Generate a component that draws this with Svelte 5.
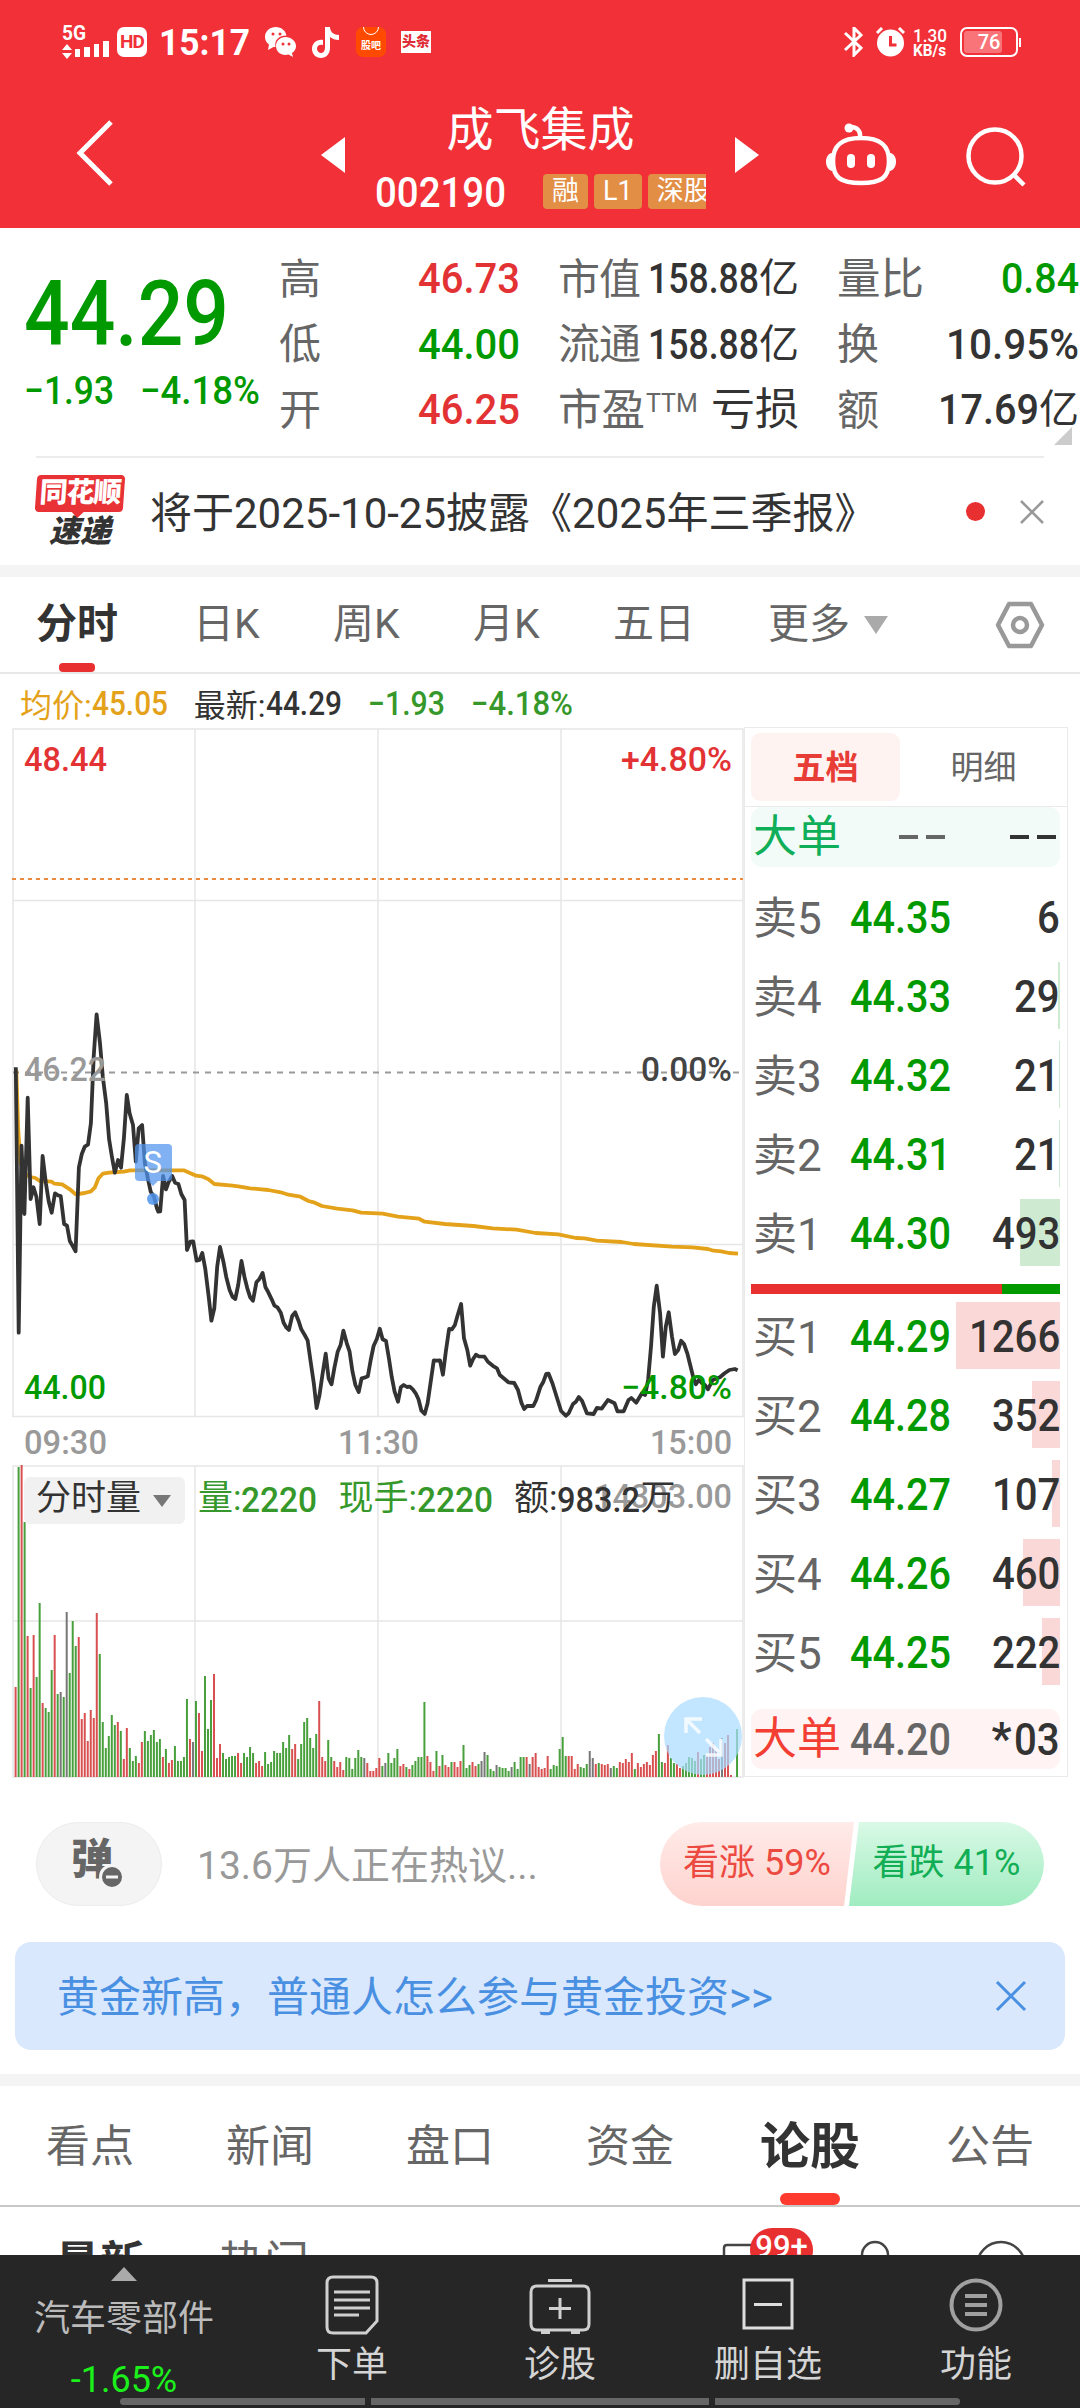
<script lang="ts">
  type Level = { name: string; price: string; amount: string; bar: number };

  // Order book, bar is the width of the volume bar in px
  const sells: Level[] = [
    { name: '卖5', price: '44.35', amount: '6', bar: 0 },
    { name: '卖4', price: '44.33', amount: '29', bar: 2 },
    { name: '卖3', price: '44.32', amount: '21', bar: 1 },
    { name: '卖2', price: '44.31', amount: '21', bar: 1 },
    { name: '卖1', price: '44.30', amount: '493', bar: 40 },
  ];
  const buys: Level[] = [
    { name: '买1', price: '44.29', amount: '1266', bar: 104 },
    { name: '买2', price: '44.28', amount: '352', bar: 28 },
    { name: '买3', price: '44.27', amount: '107', bar: 8 },
    { name: '买4', price: '44.26', amount: '460', bar: 37 },
    { name: '买5', price: '44.25', amount: '222', bar: 18 },
  ];

  const newsTabs = ['看点', '新闻', '盘口', '资金', '论股', '公告'];

  // Price and average lines, "x,y" pairs on a finer grid than the chart
  const price =
    '33,52 39,848 45,287 51,492 58,143 64,447 70,412 76,440 83,522 89,318 96,400 102,455 108,488 115,430 121,436 127,438 134,522 140,527 146,573 152,588 158,604 165,352 171,312 177,290 184,284 190,220 196,20 202,-107 209,-20 215,80 222,160 228,268 234,320 240,368 247,330 253,353 259,265 265,135 271,190 278,225 284,335 290,235 297,225 303,340 309,385 315,425 322,440 328,475 331,485 335,484 341,378 347,418 353,395 360,378 366,398 373,402 379,432 386,450 391,600 398,575 404,574 411,632 417,630 423,609 429,655 436,735 442,812 448,775 454,650 460,591 467,635 473,680 480,720 486,740 492,747 498,705 505,633 511,680 517,715 523,742 529,752 536,697 542,688 549,669 555,712 561,727 568,748 574,767 580,772 587,788 593,818 599,833 604,840 611,798 617,787 624,812 630,838 637,855 643,871 649,930 656,1000 662,1074 668,1035 674,975 681,911 687,985 693,1003 699,955 706,905 712,885 718,842 725,880 731,905 737,965 743,1005 750,1026 756,985 762,983 769,979 775,930 781,888 788,866 794,836 800,868 807,873 813,925 819,980 825,1025 832,1055 838,1012 844,1005 851,1011 857,1010 863,1018 869,1030 875,1048 881,1082 888,1092 894,1060 900,1000 907,931 913,932 920,931 926,974 932,905 939,837 945,838 951,825 957,795 964,762 970,865 977,900 983,947 989,928 995,914 1001,919 1013,920 1020,935 1033,950 1039,955 1045,975 1063,997 1075,999 1083,1020 1090,1058 1096,1077 1102,1068 1115,1068 1121,1050 1130,1010 1136,995 1142,972 1147,971 1155,1000 1167,1055 1173,1083 1183,1097 1189,1090 1198,1062 1204,1055 1210,1041 1217,1053 1227,1090 1241,1092 1248,1074 1258,1076 1271,1050 1285,1060 1291,1084 1304,1084 1314,1050 1320,1044 1330,1058 1342,1030 1349,1035 1355,990 1361,890 1367,770 1373,707 1380,790 1386,920 1392,830 1398,787 1405,860 1411,912 1418,900 1424,872 1430,882 1437,910 1443,945 1449,980 1455,1003 1461,990 1468,1000 1474,1005 1480,1018 1490,990 1505,982 1515,970 1525,960 1536,957 1542,961';
  const average =
    '34,60 38,240 43,340 52,372 64,381 74,384 83,393 108,395 114,401 130,403 146,418 158,433 177,429 190,424 198,413 206,385 215,371 228,368 259,365 272,361 384,361 410,377 422,379 436,388 448,402 486,407 498,409 523,415 561,420 587,427 603,434 628,440 645,453 658,458 673,468 705,476 737,481 755,488 800,491 832,500 876,506 888,515 930,522 990,528 1030,535 1080,539 1120,549 1167,553 1204,564 1222,565 1248,572 1300,576 1325,582 1405,590 1448,592 1480,597 1492,602 1508,604 1524,609 1543,611';

  function toPoints(line: string) {
    return line
      .split(' ')
      .map((p) => {
        const [x, y] = p.split(',').map(Number);
        return `${(x / 2.0907).toFixed(1)},${(322 + y / 3).toFixed(1)}`;
      })
      .join(' ');
  }

  // One bar per minute: r = up, g = down, k = flat
  const volume =
    'r90 g310 r312 g255 r141 g89 r142 g100 g174 r74 g69 g65 g107 r142 g83 k85 g80 k165 g104 g156 g131 r140 r58 r64 r36 r67 r59 r164 g123 g55 g29 g41 g62 g52 r55 g46 r18 r49 g29 g16 g21 r14 r35 g46 g36 g42 g47 g35 g38 r20 g28 r14 r17 g31 g16 g16 g20 g78 r38 k35 g76 r64 r26 g101 g48 g77 r103 r19 r33 g24 g18 g20 g21 g21 r24 r14 g24 g20 g30 g24 r14 r16 r11 g25 g13 g15 g26 g24 g24 g35 g29 g42 r28 r33 g18 g33 g55 g59 g39 g29 g43 r76 r20 r16 g37 g20 r16 r10 r15 r7 g20 g19 g8 g19 g27 g20 k19 r14 r6 r6 r9 r19 g11 k14 g24 g14 g19 g28 r11 r13 g10 r8 g12 g16 g20 g20 g75 r21 r15 r6 g26 r11 g22 r12 r10 g15 r15 r10 r16 g32 g9 g12 r15 r11 g13 k16 k25 g22 g8 g6 k12 g10 g9 g9 g6 k10 g15 g8 g20 g20 r20 k13 r20 r24 r10 r8 r9 r21 g8 g12 g11 g28 g40 g21 r21 r21 r8 r13 g10 g9 g13 k26 k19 r13 g14 r13 r12 r13 k9 g11 g9 r15 r14 r18 r15 r24 g8 r14 r10 r13 r15 r12 r22 r26 g43 g15 r14 r32 g19 g14 r13 r9 g11 g14 g20 g19 g16 r25 g18 g22 r22 r30 r34 r26 r18 k39 r34 r42 r2 g0 g48';
  const barColors: Record<string, string> = { r: '#d95050', g: '#48a03c', k: '#777' };
  const bars = volume.split(' ').map((v, i) => ({
    x: 14.6 + i * 3.006,
    h: Number(v.slice(1)),
    color: barColors[v[0]],
  }));
</script>

<!-- Narrow figures, fitted to a given width -->
{#snippet num(text: string, width: number, size: number, weight = 500)}
  <svg class="num" {width} height={size * 0.711}>
    <text x="0" y={size * 0.711} font-size={size} font-weight={weight} textLength={width} lengthAdjust="spacingAndGlyphs">{text}</text>
  </svg>
{/snippet}

{#snippet level(row: Level, side: string)}
  <div class="level">
    <span class="bar {side}" style="width: {row.bar}px"></span>
    <span class="name">{row.name}</span>
    <span class="price green">{@render num(row.price, 101, 45)}</span>
    <span class="amount">{@render num(row.amount, row.amount.length * 22.8, 45)}</span>
  </div>
{/snippet}

<div class="app">
  <header>
    <div class="status">
      <svg class="signal" width="50" height="36" viewBox="0 0 50 36">
        <text x="0" y="15" font-size="20" font-weight="700" textLength="24" lengthAdjust="spacingAndGlyphs">5G</text>
        <path d="M0 25l5-6 5 6zM0 28l5 6 5-6zM13 24h5v8h-5zM22 22h6v10h-6zM32 19h5v13h-5zM41 16h6v16h-6z" />
      </svg>
      <span class="hd">HD</span>
      <span class="time">{@render num('15:17', 91, 37, 700)}</span>
      <svg class="wechat" width="31" height="31" viewBox="0 0 31 31">
        <path d="M11 0C5 0 0 4 0 10c0 3 1.500 6 4 7.500L3 23l5.500-3h2C9 13 14 8.500 21.500 8.500 20.500 3.500 16 0 11 0z" />
        <path d="M20.500 10C15 10 11 14 11 19s4 9 9.500 9l3-.4L28 30l-1-4c2.500-1.500 4-4 4-7 0-5-5-9-10.500-9z" />
        <g fill="#f13038"><circle cx="8" cy="7" r="1.500" /><circle cx="15" cy="7" r="1.500" /><circle cx="18" cy="17" r="1.500" /><circle cx="24" cy="17" r="1.500" /></g>
      </svg>
      <svg class="tiktok" width="27" height="31" viewBox="0 0 27 31">
        <path d="M13 0h5c0 5 4 8 9 8v5c-4 0-6.500-1-9-3v11c0 6-4 10-9 10s-9-4-9-9c0-6 5-10 11-9v5c-4-1-6 1-6 4 0 2 2 4 4 4s4-2 4-5z" />
      </svg>
      <span class="guba"><i></i>股吧</span>
      <span class="toutiao">头条</span>
      <svg class="bluetooth" width="19" height="30" viewBox="0 0 19 30">
        <path d="M1 6l16 15-7 7V1l7 7L1 23" fill="none" stroke="#fff" stroke-width="3" />
      </svg>
      <svg class="alarm" width="31" height="30" viewBox="0 0 31 30">
        <circle cx="15.500" cy="16" r="13.500" />
        <path d="M2 6l5-5M24 1l5 5" stroke="#fff" stroke-width="3" />
        <path d="M15.500 9v9h6" fill="none" stroke="#f13038" stroke-width="3" />
      </svg>
      <span class="speed"><span>{@render num('1.30', 34, 19)}</span><span>{@render num('KB/s', 33, 16, 700)}</span></span>
      <span class="battery"><i></i><b>76</b></span>
    </div>

    <div class="title-row">
      <svg class="back" width="40" height="68" viewBox="0 0 40 68">
        <path d="M37 3L6 34l31 31" fill="none" stroke="#fff" stroke-width="5" />
      </svg>
      <svg class="prev" width="24" height="36" viewBox="0 0 24 36"><path d="M24 0v36L0 18z" /></svg>
      <div class="stock">
        <h1>成飞集成</h1>
        <div class="code">
          {@render num('002190', 131, 43)}
          <div class="tags"><span>融</span><span>L1</span><span>深股通</span></div>
        </div>
      </div>
      <svg class="next" width="24" height="36" viewBox="0 0 24 36"><path d="M0 0v36l24-18z" /></svg>
      <svg class="robot" width="70" height="64" viewBox="0 0 70 64">
        <path d="M35 15c20 0 28 8 28 23 0 17-8 22-28 22S7 55 7 38c0-15 8-23 28-23zM34 15c1-7-3-11-9-11" fill="none" stroke="#fff" stroke-width="4.500" />
        <circle cx="23" cy="5" r="4.500" />
        <rect x="21" y="31" width="8" height="14" rx="4" />
        <rect x="41" y="31" width="8" height="14" rx="4" />
        <path d="M6 30c-8 1-8 16 0 18zM64 30c8 1 8 16 0 18z" />
      </svg>
      <svg class="search" width="62" height="62" viewBox="0 0 62 62">
        <circle cx="30" cy="30" r="26.500" fill="none" stroke="#fff" stroke-width="4.500" />
        <path d="M48 48l11 11" stroke="#fff" stroke-width="4.500" />
      </svg>
    </div>
  </header>

  <section class="quote">
    <div class="last green">
      {@render num('44.29', 205, 91)}
      <div class="change">{@render num('−1.93', 90, 39)}{@render num('−4.18%', 120, 39)}</div>
    </div>
    <div class="stats">
      <span class="label">高</span><span class="value red">{@render num('46.73', 102, 43)}</span>
      <span class="label">市值</span><span class="value">{@render num('158.88', 111, 43)}<small>亿</small></span>
      <span class="label wide">量比</span><span class="value green">{@render num('0.84', 78, 43)}</span>

      <span class="label">低</span><span class="value green">{@render num('44.00', 102, 43)}</span>
      <span class="label">流通</span><span class="value">{@render num('158.88', 111, 43)}<small>亿</small></span>
      <span class="label">换</span><span class="value">{@render num('10.95%', 133, 43)}</span>

      <span class="label">开</span><span class="value red">{@render num('46.25', 102, 43)}</span>
      <span class="label wide">市盈<sup>TTM</sup></span><span class="value wide"><small>亏损</small></span>
      <span class="label">额</span><span class="value">{@render num('17.69', 101, 43)}<small>亿</small></span>
    </div>
    <i class="corner"></i>
  </section>

  <section class="news">
    <div class="badge"><b>同花顺</b><em>速递</em></div>
    <p>将于2025-10-25披露《2025年三季报》</p>
    <i class="dot"></i>
    <svg width="24" height="24" viewBox="0 0 24 24"><path d="M1 1l22 22M23 1L1 23" stroke="#999" stroke-width="2.500" /></svg>
  </section>

  <div class="band"></div>

  <nav class="periods">
    <span class="active">分时</span>
    <span>日K</span>
    <span>周K</span>
    <span>月K</span>
    <span>五日</span>
    <span>更多<i></i></span>
    <svg width="50" height="48" viewBox="0 0 50 48">
      <path d="M14 3h22l11 21-11 21H14L3 24z" fill="none" stroke="#999" stroke-width="4.500" stroke-linejoin="round" />
      <circle cx="25" cy="24" r="7" fill="none" stroke="#999" stroke-width="4.500" />
    </svg>
  </nav>

  <div class="legend">
    <span class="avg">均价:{@render num('45.05', 76, 33)}</span>
    <span>最新:{@render num('44.29', 76, 33)}</span>
    <span class="down">{@render num('−1.93', 77, 33)}</span>
    <span class="down">{@render num('−4.18%', 102, 33)}</span>
  </div>

  <section class="market">
    <div class="chart">
      <svg width="744" height="1050" viewBox="0 0 744 1050">
        <g fill="none" stroke="#e6e6e6" stroke-width="1.500">
          <path d="M13 1h730v687.500H13zM13 172.500h730M13 516.500h730M195 1v687M378 1v687M561 1v687" />
          <path d="M13 738h730v311H13zM13 893h730M195 738v311M378 738v311M561 738v311" />
        </g>
        <path d="M12 151h731" stroke="#ec8a3c" stroke-width="2" stroke-dasharray="4 4" />
        <path d="M13 344.500h726" stroke="#999" stroke-width="2" stroke-dasharray="6 6" />

        <polyline points={toPoints(average)} class="line" stroke="#e3a21a" />
        <polyline points={toPoints(price)} class="line" stroke="#333" />

        <!-- Sell marker -->
        <g fill="#4f94ee">
          <rect x="135" y="416" width="37" height="37" rx="4" opacity=".72" />
          <path d="M148 453h10l-5 5z" opacity=".72" />
          <circle cx="153" cy="471" r="6" opacity=".85" />
          <text x="143.500" y="445" font-size="31" fill="#fff">S</text>
        </g>

        <g font-size="34" font-weight="500">
          <text x="24" y="43" textLength="83" lengthAdjust="spacingAndGlyphs" fill="#e33234">48.44</text>
          <text x="621" y="43" textLength="111" lengthAdjust="spacingAndGlyphs" fill="#e33234">+4.80%</text>
          <text x="24" y="353" textLength="82" lengthAdjust="spacingAndGlyphs" fill="#999">46.22</text>
          <text x="641" y="353" textLength="91" lengthAdjust="spacingAndGlyphs" fill="#444">0.00%</text>
          <text x="24" y="671" textLength="82" lengthAdjust="spacingAndGlyphs" fill="#090">44.00</text>
          <text x="621" y="671" textLength="111" lengthAdjust="spacingAndGlyphs" fill="#090">−4.80%</text>
          <g fill="#999">
            <text x="24" y="726" textLength="83" lengthAdjust="spacingAndGlyphs">09:30</text>
            <text x="338" y="726" textLength="81" lengthAdjust="spacingAndGlyphs">11:30</text>
            <text x="650" y="726" textLength="82" lengthAdjust="spacingAndGlyphs">15:00</text>
            <text x="594" y="780" textLength="138" lengthAdjust="spacingAndGlyphs">14303.00</text>
          </g>
        </g>

        {#each bars as bar}
          <rect x={bar.x} y={1049 - bar.h} width="2" height={bar.h} fill={bar.color} />
        {/each}
      </svg>

      <div class="volume-info">
        <button>分时量<i></i></button>
        <span class="down">量:{@render num('2220', 76, 35)}</span>
        <span class="down">现手:{@render num('2220', 76, 35)}</span>
        <span>额:{@render num('983.2', 83, 35)}万</span>
      </div>

      <svg class="expand" width="78" height="78" viewBox="0 0 78 78">
        <circle cx="39" cy="39" r="39" fill="#a8dcff" opacity=".7" />
        <path d="M22 36V22h16M23 23l13 13M42 42l13 13M57 42v16H42" fill="none" stroke="#fff" stroke-width="3.500" opacity=".8" />
      </svg>
    </div>

    <div class="book">
      <div class="book-tabs"><span class="active">五档</span><span>明细</span></div>
      <div class="big sell-big">
        <span class="name">大单</span>
        <span class="price dashes"><i></i><i></i></span>
        <span class="amount dashes"><i></i><i></i></span>
      </div>
      <div class="levels sells">
        {#each sells as row}{@render level(row, 'sell')}{/each}
      </div>
      <div class="ratio"><i></i></div>
      <div class="levels">
        {#each buys as row}{@render level(row, 'buy')}{/each}
      </div>
      <div class="big buy-big">
        <span class="name">大单</span>
        <span class="price">{@render num('44.20', 101, 45)}</span>
        <span class="amount star">*{@render num('03', 45.6, 45)}</span>
      </div>
    </div>
  </section>

  <section class="talk">
    <div class="danmu">
      弹
      <svg width="26" height="26" viewBox="0 0 26 26">
        <circle cx="13" cy="13" r="11.500" fill="#666" stroke="#f4f4f4" stroke-width="3" />
        <path d="M7 13h12" stroke="#f4f4f4" stroke-width="3" />
      </svg>
    </div>
    <p>13.6万人正在热议...</p>
    <div class="vote">
      <span class="bull">看涨 59%</span>
      <span class="bear">看跌 41%</span>
    </div>
  </section>

  <section class="banner">
    <p>黄金新高，普通人怎么参与黄金投资&gt;&gt;</p>
    <svg width="32" height="32" viewBox="0 0 32 32"><path d="M2 2l28 28M30 2L2 30" stroke="#4a90e2" stroke-width="3" /></svg>
  </section>

  <div class="band"></div>

  <nav class="news-tabs">
    {#each newsTabs as tab}
      <span class:active={tab === '论股'}>{tab}</span>
    {/each}
  </nav>

  <div class="posts">
    <b>最新</b>
    <span>热门</span>
    <div class="tools">
      <svg width="320" height="48" viewBox="0 0 320 48" fill="none" stroke="#444" stroke-width="2.500">
        <path d="M14 60V41q0-3 3-3h40" />
        <circle cx="165" cy="48" r="13" />
        <circle cx="291" cy="59" r="24" />
      </svg>
      <em>99+</em>
    </div>
  </div>

  <footer>
    <div class="sector">
      <i></i>
      <span>汽车零部件</span>
      <b>-1.65%</b>
    </div>
    <div class="action">
      <svg width="64" height="64" viewBox="0 0 64 64" stroke="#d0d0d0" stroke-width="3">
        <path d="M13 4h38q6 0 6 6v38l-11 12H13q-6 0-6-6V10q0-6 6-6z" />
        <path d="M14 19h36M14 27h36M14 35h36M14 42h25" />
      </svg>
      <span>下单</span>
    </div>
    <div class="action">
      <svg width="64" height="64" viewBox="0 0 64 64" stroke="#d0d0d0" stroke-width="3">
        <path d="M9 13h46q6 0 6 6v32q0 6-6 6H9q-6 0-6-6V19q0-6 6-6zM20 7.500h24M32 25v21M21 35.500h22M13 59.500h9M43 59.500h9" />
      </svg>
      <span>诊股</span>
    </div>
    <div class="action">
      <svg width="64" height="64" viewBox="0 0 64 64" stroke="#ddd" stroke-width="3">
        <path d="M8 7h48v48H8zM18 31.500h28" />
      </svg>
      <span>删自选</span>
    </div>
    <div class="action">
      <svg width="64" height="64" viewBox="0 0 64 64" stroke="#a0a0a0" stroke-width="4">
        <circle cx="32" cy="32" r="24.500" />
        <path d="M21 23h22M21 32h22M21 41h22" />
      </svg>
      <span>功能</span>
    </div>
    <div class="home"><i></i><i></i><i></i></div>
  </footer>
</div>

<style>
  :global(body) {
    margin: 0;
    background: #fff;
  }

  .app {
    width: 1080px;
    height: 2408px;
    overflow: hidden;
    font-family: Roboto, 'Noto Sans CJK SC', sans-serif;
    color: #333;
    background: #fff;
  }

  svg {
    display: block;
    flex: none;
  }

  p,
  h1 {
    margin: 0;
    font-weight: 400;
  }

  span {
    white-space: nowrap;
  }

  .num {
    overflow: visible;
    fill: currentColor;
  }

  .green {
    color: #090;
  }

  .red {
    color: #e33234;
  }

  .down {
    color: #36982a;
  }

  /* Header */
  header {
    height: 228px;
    color: #fff;
    background: #f13038;
  }

  header svg {
    fill: currentColor;
  }

  .status {
    display: flex;
    align-items: center;
    height: 84px;
    padding: 0 62px 0 62px;
  }

  .signal {
    margin-top: 2px;
    overflow: visible;
  }

  .hd {
    width: 30px;
    height: 30px;
    margin-left: 5px;
    border-radius: 7px;
    background: #fff;
    color: #f13038;
    font: 700 19px/30px Roboto, sans-serif;
    text-align: center;
    letter-spacing: -1px;
  }

  .time {
    margin-left: 12px;
  }

  .wechat {
    margin-left: 15px;
  }

  .tiktok {
    margin-left: 16px;
  }

  .guba {
    position: relative;
    width: 30px;
    height: 30px;
    margin-left: 17px;
    border-radius: 7px;
    overflow: hidden;
    background: #ff4a00;
    font-size: 10px;
    font-weight: 700;
    line-height: 38px;
    text-align: center;
  }

  .guba i {
    position: absolute;
    top: -8px;
    left: 7px;
    width: 14px;
    height: 14px;
    border: 1px solid #fff;
    border-radius: 50%;
  }

  .toutiao {
    width: 30px;
    height: 22px;
    margin-left: 15px;
    background: #fff;
    color: #e02c34;
    font-size: 14px;
    font-weight: 900;
    line-height: 21px;
    text-align: center;
  }

  .bluetooth {
    margin-left: auto;
  }

  .alarm {
    margin-left: 12px;
  }

  .speed {
    display: flex;
    flex-direction: column;
    gap: 4px;
    width: 34px;
    margin-left: 7px;
  }

  .battery {
    position: relative;
    box-sizing: border-box;
    width: 58px;
    height: 30px;
    margin-left: 13px;
    padding: 2px;
    border: 2px solid #fff;
    border-radius: 7px;
  }

  .battery i {
    display: block;
    width: 38px;
    height: 22px;
    border-radius: 3px;
    background: #f87479;
  }

  .battery b {
    position: absolute;
    inset: 0;
    font-size: 20px;
    font-weight: 500;
    line-height: 27px;
    text-align: center;
  }

  .battery::after {
    content: '';
    position: absolute;
    right: -5px;
    top: 9px;
    width: 2px;
    height: 9px;
    background: #fff;
  }

  .title-row {
    display: flex;
    align-items: center;
    height: 138px;
  }

  .back {
    margin-left: 74px;
  }

  .prev {
    margin: 4px 0 0 207px;
  }

  .stock {
    width: 331px;
    margin: 5px 29px 0 30px;
  }

  .stock h1 {
    height: 73px;
    font-size: 47px;
    line-height: 89px;
    text-align: center;
  }

  .code {
    display: flex;
    align-items: center;
    justify-content: space-between;
    height: 70px;
    margin-top: -2px;
  }

  .tags {
    display: flex;
    gap: 6px;
    width: 163px;
    overflow: hidden;
  }

  .tags span {
    flex: none;
    padding: 0 9px;
    border-radius: 4px;
    background: #e28e45;
    font-size: 27px;
    line-height: 35px;
  }

  .next {
    margin-top: 4px;
  }

  .robot {
    margin: 4px 0 0 67px;
  }

  .search {
    margin: 7px 0 0 69px;
  }

  /* Quote */
  .quote {
    position: relative;
    display: flex;
    height: 228px;
  }

  .last {
    width: 255px;
    padding: 52px 0 0 24px;
  }

  .change {
    display: flex;
    gap: 26px;
    margin-top: 31px;
  }

  .stats {
    display: grid;
    grid-template-columns: 60px 181px 38px 100px 141px 38px 80px 162px;
    grid-template-rows: repeat(3, 65.5px);
    align-items: center;
    height: 196px;
    margin-top: 17px;
    font-size: 42px;
  }

  .stats .label {
    margin-top: -5px;
    color: #666;
  }

  .stats .label:nth-child(6n + 3) {
    grid-column: 4;
    letter-spacing: -1px;
  }

  .stats .label:nth-child(6n + 5) {
    grid-column: 7;
  }

  .stats .label.wide {
    font-size: 43.5px;
    letter-spacing: 0;
  }

  .stats sup {
    position: relative;
    top: -13px;
    margin-left: 1px;
    font-size: 25px;
    vertical-align: baseline;
  }

  .value {
    display: flex;
    align-items: center;
    justify-content: flex-end;
  }

  .value small {
    margin-top: -5px;
    font-size: 40px;
  }

  .value.wide small {
    font-size: 44px;
  }

  .corner {
    position: absolute;
    right: 8px;
    top: 199px;
    border-left: 18px solid transparent;
    border-bottom: 18px solid #ccc;
  }

  .news {
    display: flex;
    align-items: center;
    box-sizing: border-box;
    height: 109px;
    margin: 0 36px;
    border-top: 2px solid #ececec;
  }

  .badge {
    width: 88px;
    margin: 3px 26px 0 0;
    font-size: 28px;
    text-align: center;
  }

  .badge b {
    position: relative;
    display: block;
    height: 37px;
    border-radius: 4px;
    background: #e83236;
    color: #fff;
    font-weight: 900;
    letter-spacing: -1px;
    line-height: 36px;
    transform: skewX(-4deg);
  }

  .badge b::after {
    content: '';
    position: absolute;
    left: 37px;
    top: 37px;
    border: 6px solid transparent;
    border-top-color: #e83236;
  }

  .badge em {
    display: block;
    font-size: 31px;
    font-weight: 900;
    line-height: 40px;
  }

  .news p {
    margin-top: -5px;
    font-size: 42px;
  }

  .dot {
    width: 19px;
    height: 19px;
    margin: 0 35px 0 auto;
    border-radius: 50%;
    background: #e93030;
  }

  .band {
    height: 12px;
    background: #f4f4f4;
  }

  /* Period tabs */
  .periods {
    display: flex;
    align-items: center;
    box-sizing: border-box;
    height: 97px;
    padding: 0 35px 0 36px;
    border-bottom: 2px solid #e8e8e8;
    color: #666;
    font-size: 41px;
  }

  .periods span {
    position: relative;
    display: flex;
    align-items: center;
    width: 140px;
    height: 95px;
    line-height: 99px;
  }

  .periods span:first-child {
    width: 157px;
  }

  .periods span:nth-child(5) {
    width: 155px;
  }

  .periods .active {
    color: #333;
    font-weight: 700;
  }

  .periods .active::after {
    content: '';
    position: absolute;
    left: 23px;
    bottom: 0;
    width: 36px;
    height: 9px;
    border-radius: 4px;
    background: #e93030;
  }

  .periods span i {
    margin-left: 14px;
    border: 12px solid transparent;
    border-top: 18px solid #aaa;
    border-bottom: 0;
  }

  .periods svg {
    margin-left: auto;
  }

  .legend {
    display: flex;
    align-items: center;
    gap: 26px;
    height: 54px;
    padding: 4px 0 0 20px;
    box-sizing: border-box;
    font-size: 32px;
  }

  .legend span,
  .volume-info span {
    display: flex;
    align-items: center;
  }

  .legend .num {
    margin-top: 2px;
  }

  .legend .avg {
    color: #e3a21a;
  }

  /* Chart */
  .market {
    display: flex;
    height: 1050px;
  }

  .chart {
    position: relative;
    width: 744px;
  }

  .line {
    fill: none;
    stroke-width: 3.8;
    stroke-linejoin: round;
  }

  .volume-info {
    position: absolute;
    left: 24px;
    top: 749px;
    display: flex;
    align-items: center;
    font-size: 35px;
    line-height: 42px;
  }

  .volume-info button {
    display: flex;
    align-items: center;
    width: 161px;
    height: 47px;
    margin-right: 13px;
    padding: 0 0 4px 12px;
    border: 0;
    border-radius: 6px;
    background: #f1f1f1;
    color: #333;
    font: inherit;
  }

  .volume-info button i {
    margin: 4px 0 0 12px;
    border: 9px solid transparent;
    border-top: 12px solid #777;
    border-bottom: 0;
  }

  .volume-info span {
    margin: -4px 21px 0 0;
  }

  .volume-info .num {
    margin-top: 2px;
  }

  .expand {
    position: absolute;
    left: 664px;
    top: 969px;
  }

  /* Order book */
  .book {
    box-sizing: border-box;
    width: 324px;
    height: 1050px;
    margin-top: -1px;
    padding: 0 7px 0 6px;
    border: 1px solid #eaeaea;
  }

  .book-tabs {
    display: flex;
    box-sizing: border-box;
    height: 79px;
    margin: 0 -7px 0 -6px;
    padding: 5px 0 5px 6px;
    border-bottom: 1px solid #eaeaea;
    color: #666;
    font-size: 33px;
    line-height: 70px;
    text-align: center;
  }

  .book-tabs span {
    flex: 1;
  }

  .book-tabs span:first-child {
    flex: 0 0 149px;
  }

  .book-tabs .active {
    border-radius: 9px;
    background: #fff3f2;
    color: #e83c36;
    font-weight: 700;
  }

  .big,
  .level {
    position: relative;
    display: grid;
    grid-template-columns: 97px 1fr auto;
    align-items: center;
    padding-left: 2px;
  }

  .big {
    height: 60px;
    border-radius: 11px;
    font-size: 44px;
    line-height: 58px;
  }

  .sell-big {
    background: #f2fbf7;
  }

  .sell-big .name {
    color: #0fae58;
  }

  .buy-big {
    margin-top: 18px;
    background: #fff4f3;
  }

  .buy-big .name {
    color: #f33e33;
  }

  .buy-big .price {
    color: #666;
  }

  .star {
    display: flex;
    align-items: center;
    gap: 3px;
    height: 60px;
    font-weight: 700;
    line-height: 74px;
  }

  .dashes {
    display: flex;
    gap: 8px;
    padding-right: 4px;
    color: #333;
  }

  .price.dashes {
    padding: 0 0 0 49px;
    color: #666;
  }

  .dashes i {
    width: 19px;
    height: 4px;
    background: currentColor;
  }

  .levels {
    padding-top: 2px;
  }

  .levels.sells {
    padding-top: 10px;
  }

  .level {
    height: 79px;
    font-size: 44px;
  }

  .level .name {
    margin-top: -4px;
    color: #666;
  }

  .level .price,
  .level .amount {
    z-index: 1;
  }

  .bar {
    position: absolute;
    right: 0;
    top: 6px;
    height: 67px;
  }

  .bar.sell {
    background: #ceead0;
  }

  .bar.buy {
    background: #fad8d8;
  }

  .ratio {
    height: 10px;
    margin-top: 12px;
    background: #090;
  }

  .ratio i {
    display: block;
    width: 251px;
    height: 10px;
    background: #e93030;
  }

  /* Discussion */
  .talk {
    display: flex;
    align-items: center;
    height: 84px;
    margin: 44px 36px 36px;
  }

  .danmu {
    position: relative;
    box-sizing: border-box;
    width: 126px;
    height: 84px;
    padding-left: 34px;
    border: 1px solid #ececec;
    border-radius: 42px;
    background: #f4f4f4;
    color: #666;
    font-size: 42px;
    font-weight: 900;
    line-height: 74px;
  }

  .danmu svg {
    position: absolute;
    left: 62px;
    top: 41px;
  }

  .talk p {
    margin: -5px 0 0 35px;
    color: #999;
    font-size: 39px;
  }

  .vote {
    display: flex;
    width: 384px;
    height: 84px;
    margin-left: auto;
    border-radius: 42px;
    overflow: hidden;
    font-size: 36px;
    line-height: 82px;
  }

  .bull {
    width: 194px;
    background: linear-gradient(#ffebe9, #fed3ce);
    color: #ec4a40;
    text-align: center;
    clip-path: polygon(0 0, 100% 0, 184px 100%, 0 100%);
  }

  .bear {
    flex: 1;
    margin-left: -5px;
    background: linear-gradient(#d9f9e6, #a0ecc0);
    color: #11ae55;
    text-align: center;
    clip-path: polygon(10px 0, 100% 0, 100% 100%, 0 100%);
  }

  .banner {
    display: flex;
    align-items: center;
    justify-content: space-between;
    height: 108px;
    margin: 0 15px 24px;
    padding: 0 38px 0 42px;
    border-radius: 16px;
    background: #d9e8fc;
    color: #4a90e2;
    font-size: 42px;
  }

  .banner p {
    margin-top: -5px;
  }

  /* News tabs */
  .news-tabs {
    display: flex;
    box-sizing: border-box;
    height: 121px;
    border-bottom: 2px solid #c8c8c8;
    color: #666;
    font-size: 44px;
    line-height: 122px;
  }

  .news-tabs span {
    position: relative;
    flex: 1;
    text-align: center;
  }

  .news-tabs .active {
    height: 119px;
    color: #333;
    font-size: 50px;
    font-weight: 700;
  }

  .news-tabs .active::after {
    content: '';
    position: absolute;
    left: 60px;
    bottom: 0;
    width: 60px;
    height: 12px;
    border-radius: 6px;
    background: #ff3b30;
  }

  .posts {
    display: flex;
    height: 48px;
    padding-left: 55px;
    overflow: hidden;
    font-size: 45px;
    line-height: 114px;
  }

  .posts span {
    margin-left: 74px;
    color: #666;
  }

  .tools {
    position: relative;
    margin-left: auto;
    margin-right: 50px;
  }

  .tools em {
    position: absolute;
    left: 40px;
    top: 21px;
    width: 63px;
    height: 44px;
    border-radius: 22px;
    background: #e93030;
    color: #fff;
    font-size: 31px;
    font-style: normal;
    font-weight: 500;
    line-height: 38px;
    text-align: center;
  }

  /* Bottom bar */
  footer {
    position: relative;
    display: grid;
    grid-template-columns: 248px repeat(4, 208px);
    height: 153px;
    background: #262626;
    color: #d4d4d4;
    font-size: 36px;
  }

  .sector {
    display: flex;
    flex-direction: column;
    align-items: center;
    padding-top: 12px;
    color: #bbb;
  }

  .sector i {
    border: 13px solid transparent;
    border-top: 0;
    border-bottom: 14px solid #aaa;
  }

  .sector span {
    margin-top: 13px;
    line-height: 50px;
  }

  .sector b {
    margin-top: 11px;
    color: #1bf01b;
    font-weight: 400;
    line-height: 50px;
  }

  .action {
    display: flex;
    flex-direction: column;
    align-items: center;
    padding-top: 18px;
  }

  .action svg {
    fill: none;
  }

  .action span {
    line-height: 57px;
  }

  .home {
    position: absolute;
    left: 120px;
    bottom: 3px;
    display: grid;
    grid-template-columns: 245px 338px 245px;
    gap: 6px;
  }

  .home i {
    height: 7px;
    background: #666;
  }

  .home i:first-child {
    border-radius: 4px 0 0 4px;
  }

  .home i:last-child {
    border-radius: 0 4px 4px 0;
  }
</style>
